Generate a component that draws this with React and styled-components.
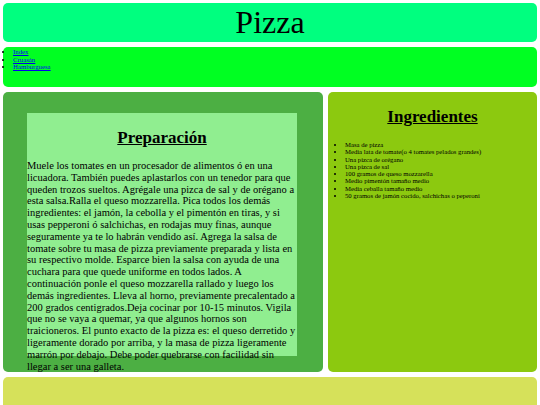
import React from 'react'
import styled, { createGlobalStyle } from "styled-components"

const Global = createGlobalStyle`
  html, body {
    margin: 0;
    padding: 0;
    background: #ffffff;
    font-family: "Liberation Serif", "Times New Roman", serif;
  }
`

const Page = styled.div`
  display: grid;
  grid-template-columns: 320px 1fr;
  grid-template-rows: 39px 40px 280px 60px;
  gap: 5px;
  padding: 3px;
  height: 405px;
  box-sizing: border-box;
  overflow: hidden;
`

const Header = styled.header`
  grid-column: 1 / 3;
  background-color: #00ff7f;
  border-radius: 5px;
  display: flex;
  align-items: center;
  justify-content: center;
`

const Title = styled.h1`
  margin: 0;
  font-size: 32px;
  font-weight: normal;
  color: #000;
`

const Nav = styled.nav`
  grid-column: 1 / 3;
  background-color: #00ff22;
  border-radius: 5px;
`

const NavList = styled.ul`
  margin: 0;
  padding: 1px 0 0 10px;
  font-size: 6.8px;
  line-height: 7.7px;
`

const NavLink = styled.a`
  color: #0000ee;
  text-decoration: underline;
`

const Section = styled.section`
  background-color: #4caf43;
  border-radius: 5px;
  padding: 21px 26px 0 24px;
`

const Article = styled.article`
  background-color: #90ee90;
  height: 243px;
`

const Heading = styled.h2`
  margin: 0;
  padding-top: 15px;
  font-size: 17px;
  line-height: 20px;
  font-weight: bold;
  text-align: center;
  text-decoration: underline;
`

const Text = styled.p`
  margin: 12px 0 0;
  font-size: 10.5px;
  line-height: 11.8px;
  color: #000;
`

const Aside = styled.aside`
  background-color: #8cc90f;
  border-radius: 5px;
`

const IngredientList = styled.ul`
  margin: 14px 0 0;
  padding-left: 17px;
  font-size: 6.7px;
  line-height: 7.3px;
`

const Footer = styled.footer`
  grid-column: 1 / 3;
  background-color: #d6e15a;
  border-radius: 5px;
`

const ingredientes = [
  "Masa de pizza",
  "Media lata de tomate(o 4 tomates pelados grandes)",
  "Una pizca de orégano",
  "Una pizca de sal",
  "100 gramos de queso mozzarella",
  "Medio pimentón tamaño medio",
  "Media ceballa tamaño medio",
  "50 gramos de jamón cocido, salchichas o peperoni",
]

const App = () => {
  return (
    <Page>
      <Global />
      <Header>
        <Title>Pizza</Title>
      </Header>
      <Nav>
        <NavList>
          <li><NavLink href="#">Index</NavLink></li>
          <li><NavLink href="#">Cruasán</NavLink></li>
          <li><NavLink href="#">Hamburguesa</NavLink></li>
        </NavList>
      </Nav>
      <Section>
        <Article>
          <Heading>Preparación</Heading>
          <Text>
            Muele los tomates en un procesador de alimentos ó en una licuadora. También puedes aplastarlos con un tenedor para que queden trozos sueltos. Agrégale una pizca de sal y de orégano a esta salsa.Ralla el queso mozzarella. Pica todos los demás ingredientes: el jamón, la cebolla y el pimentón en tiras, y si usas pepperoni ó salchichas, en rodajas muy finas, aunque seguramente ya te lo habrán vendido así. Agrega la salsa de tomate sobre tu masa de pizza previamente preparada y lista en su respectivo molde. Esparce bien la salsa con ayuda de una cuchara para que quede uniforme en todos lados. A continuación ponle el queso mozzarella rallado y luego los demás ingredientes. Lleva al horno, previamente precalentado a 200 grados centigrados.Deja cocinar por 10-15 minutos. Vigila que no se vaya a quemar, ya que algunos hornos son traicioneros. El punto exacto de la pizza es: el queso derretido y ligeramente dorado por arriba, y la masa de pizza ligeramente marrón por debajo. Debe poder quebrarse con facilidad sin llegar a ser una galleta.
          </Text>
        </Article>
      </Section>
      <Aside>
        <Heading>Ingredientes</Heading>
        <IngredientList>
          {ingredientes.map((item) => (
            <li key={item}>{item}</li>
          ))}
        </IngredientList>
      </Aside>
      <Footer />
    </Page>
  )
}

export default App
